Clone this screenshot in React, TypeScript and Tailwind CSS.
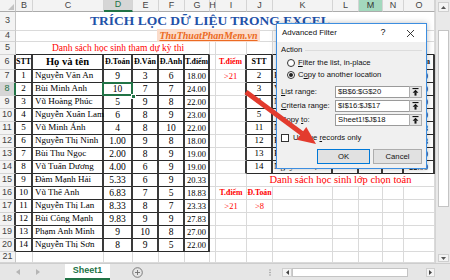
import React from 'react';

type Item = { c: number; w?: number; span?: string; t?: React.ReactNode; k?: string; sel?: boolean };

const LETTERS = ['B', 'C', 'D', 'E', 'F', 'G', 'H', 'I', 'J', 'K', 'L', 'M', 'N', 'O'];

const PEOPLE: string[][] = [
  ['1', 'Nguyễn Văn An', '9', '3', '6', '18.00'],
  ['2', 'Bùi Minh Anh', '10', '7', '7', '24.00'],
  ['3', 'Vũ Hoàng Phúc', '5', '9', '8', '22.00'],
  ['4', 'Nguyễn Xuân Lam', '6', '8', '9', '23.00'],
  ['5', 'Vũ Minh Ánh', '4', '8', '10', '22.00'],
  ['6', 'Nguyễn Thị Ninh', '1.00', '9', '8', '18.00'],
  ['7', 'Bùi Thu Ngọc', '2.00', '8', '9', '19.00'],
  ['8', 'Vũ Tuấn Dương', '4.00', '6', '9', '19.00'],
  ['9', 'Đàm Mạnh Hải', '5.33', '6', '9', '20.33'],
  ['10', 'Vũ Thế Anh', '6.83', '7', '5', '18.83'],
  ['11', 'Nguyễn Thị Lan', '8.33', '8', '7', '23.33'],
  ['12', 'Bùi Công Mạnh', '9.83', '9', '9', '27.83'],
  ['13', 'Phạm Anh Minh', '9', '10', '8', '27.00'],
  ['14', 'Nguyễn Thị Sơn', '8', '9', '5', '22.00'],
];

// rows copied by the previous filter (T.điểm > 21); only J, K and O peek out from under the dialog
const PICKED = [2, 3, 4, 5, 11, 12, 13, 14];
const PEEK = [0, 1, 5];

const HEADS = ['STT', 'Họ và tên', 'Đ.Toán', 'Đ.Văn', 'Đ.Anh', 'T.điểm'];
const HEAD_K = [
  'justify-center font-bold text-[8px]',
  'justify-center font-bold text-[10.5px]',
  'justify-center font-bold text-[8px]',
  'justify-center font-bold text-[8px]',
  'justify-center font-bold text-[8px]',
  'justify-center font-bold text-[7.8px]',
];
const BODY_K = [
  'justify-center text-[9px]',
  'pl-[2px] text-[9px]',
  'justify-center text-[9.5px]',
  'justify-center text-[9.5px]',
  'justify-center text-[9.5px]',
  'justify-center text-[8.5px]',
];
const RED = 'text-[#ff0000]';

const inLeft = (r: number, c: number) => r >= 6 && r <= 20 && c >= 0 && c <= 5;
const inRight = (r: number, c: number) => r >= 6 && r <= 14 && c >= 8 && c <= 13;
const inTable = (r: number, c: number) => inLeft(r, c) || inRight(r, c);

function rowItems(r: number): Item[] {
  const items: Item[] = [];
  if (r === 3) {
    return [{ c: 0, w: 14, span: 'col-span-14', t: 'TRÍCH LỌC DỮ LIỆU TRONG EXCEL', k: 'pl-[74px] font-bold text-[13.5px] text-[#1f52a8]' }];
  }
  if (r === 4) items.push({ c: 0, w: 7, span: 'col-span-7' });
  if (r === 5) {
    items.push({ c: 0, w: 6, span: 'col-span-6', t: 'Danh sách học sinh tham dự kỳ thi', k: `justify-center pl-[11px] text-[9.5px] ${RED}` });
  }
  if (r >= 6 && r <= 20) {
    const data = r === 6 ? HEADS : PEOPLE[r - 7];
    data.forEach((t, i) => items.push({ c: i, t, k: r === 6 ? HEAD_K[i] : BODY_K[i], sel: r === 8 && i === 2 }));
  }
  if (r >= 6 && r <= 14) {
    const data = r === 6 ? HEADS : PEOPLE[PICKED[r - 7] - 1];
    PEEK.forEach((i) => {
      if (r === 6 && i === 1) return;
      items.push({ c: 8 + i, t: data[i], k: r === 6 ? HEAD_K[i] : i === 1 ? 'pl-[1px] text-[9px] overflow-hidden' : BODY_K[i] });
    });
  }
  if (r === 6) items.push({ c: 7, t: 'T.điểm', k: `justify-center font-bold text-[7.8px] ${RED}` });
  if (r === 7) items.push({ c: 7, t: '>21', k: `justify-center text-[8.5px] ${RED}` });
  if (r === 15) {
    items.push({ c: 8, w: 6, span: 'col-span-6', t: 'Danh sách học sinh lớp chọn toán', k: `justify-center text-[10.5px] ${RED}` });
  }
  if (r === 16) {
    items.push({ c: 7, t: 'T.điểm', k: `justify-center font-bold text-[7.8px] ${RED}` });
    items.push({ c: 8, t: 'Đ.Toán', k: `justify-center font-bold text-[7.8px] ${RED}` });
  }
  if (r === 17) {
    items.push({ c: 7, t: '>21', k: `justify-center text-[8.5px] ${RED}` });
    items.push({ c: 8, t: '>8', k: `justify-center text-[8.5px] ${RED}` });
  }
  return items;
}

function RowHead({ r }: { r: number }) {
  const sel = r === 8;
  const side = sel ? 'border-r-2 border-r-[#217346]' : inTable(r, 0) ? 'border-r-2 border-r-[#3a3a3a]' : 'border-r border-r-[#c6c6c6]';
  return (
    <div
      className={`flex items-center justify-center border-b border-b-[#d4d4d4] font-['Liberation_Sans',Arial,sans-serif] text-[9px] ${side} ${
        sel ? 'bg-[#d6d6d6] text-[#217346]' : 'bg-[#f3f3f3] text-[#444]'
      }`}
    >
      {r}
    </div>
  );
}

function SheetRow({ r }: { r: number }) {
  const items = rowItems(r);
  const cells: React.ReactNode[] = [];
  let c = 0;
  while (c < 14) {
    const it: Item = items.find((x) => x.c === c) ?? { c };
    const w = it.w ?? 1;
    const cols = Array.from({ length: w }, (_, i) => c + i);
    const right = inTable(r, c + w - 1) || inTable(r, c + w);
    const bottom = cols.some((x) => inTable(r, x) || inTable(r + 1, x));
    cells.push(
      <div
        key={c}
        className={`flex items-center whitespace-nowrap border-b ${right ? 'border-r-2 border-r-[#3a3a3a]' : 'border-r border-r-[#dadada]'} ${
          bottom ? 'border-b-[#2b2b2b]' : 'border-b-[#dadada]'
        } ${it.sel ? 'relative' : ''} ${it.span ?? ''} ${it.k ?? ''}`}
      >
        {it.t}
        {it.sel && (
          <>
            <div className="absolute -left-[2px] -top-[1px] -right-[2px] -bottom-[1px] z-10 border-2 border-[#217346]" />
            <div className="absolute -right-[5px] -bottom-[4px] z-10 w-[5px] h-[5px] bg-[#217346] border border-white" />
          </>
        )}
      </div>
    );
    c += w;
  }
  return (
    <>
      <RowHead r={r} />
      {cells}
    </>
  );
}

function ColumnHeads() {
  return (
    <>
      <div className="relative bg-[#f3f3f3] border-r border-b border-r-[#c6c6c6] border-b-[#ababab]">
        <svg className="absolute right-[1px] bottom-[1px]" width="6" height="6" viewBox="0 0 6 6">
          <polygon points="6,0 6,6 0,6" fill="#c2c2c2" />
        </svg>
      </div>
      {LETTERS.map((L) => (
        <div
          key={L}
          className={`flex items-center justify-center border-r border-r-[#d4d4d4] font-['Liberation_Sans',Arial,sans-serif] text-[9px] ${
            L === 'D'
              ? 'bg-[#d6d6d6] text-[#217346] border-b-2 border-b-[#217346]'
              : L === 'M'
              ? 'bg-[#a3d8bd] text-[#333] border-b border-b-[#ababab]'
              : 'bg-[#f3f3f3] text-[#444] border-b border-b-[#ababab]'
          }`}
        >
          {L}
        </div>
      ))}
    </>
  );
}

function VScroll() {
  return (
    <div className="w-[15px] h-[263px] flex flex-col items-center bg-[#e9e9e9] border-l border-[#d4d4d4]">
      <div className="mt-[2px] w-[11px] h-[10px] flex items-center justify-center bg-[#f4f4f4] border border-[#cfcfcf]">
        <svg width="5" height="3" viewBox="0 0 5 3">
          <polygon points="2.5,0 5,3 0,3" fill="#555" />
        </svg>
      </div>
      <div className="mt-[18px] w-[11px] h-[177px] bg-white border border-[#c4c4c4]" />
      <div className="flex-1" />
      <div className="mb-[1px] w-[11px] h-[8px] flex items-center justify-center bg-[#f4f4f4] border border-[#cfcfcf]">
        <svg width="5" height="3" viewBox="0 0 5 3">
          <polygon points="0,0 5,0 2.5,3" fill="#555" />
        </svg>
      </div>
    </div>
  );
}

function TabBar() {
  return (
    <div className="h-[17px] flex items-stretch bg-[#e6e6e6] border-t border-[#cdcdcd] font-['Liberation_Sans',Arial,sans-serif]">
      <div className="w-[65px] flex items-center">
        <svg className="ml-[16px]" width="4" height="6" viewBox="0 0 4 6">
          <polygon points="4,0 4,6 0,3" fill="#b5b5b5" />
        </svg>
        <svg className="ml-[16px]" width="4" height="6" viewBox="0 0 4 6">
          <polygon points="0,0 4,3 0,6" fill="#b5b5b5" />
        </svg>
      </div>
      <div className="w-[45px] flex items-center justify-center bg-white border-b-2 border-[#217346] text-[9px] font-bold text-[#217346]">
        Sheet1
      </div>
      <div className="w-[22px]" />
      <div className="w-[11px] flex items-center">
        <svg width="11" height="11" viewBox="0 0 11 11">
          <circle cx="5.5" cy="5.5" r="4.8" fill="none" stroke="#6f6f6f" strokeWidth="0.9" />
          <path d="M5.5 3v5M3 5.5h5" stroke="#6f6f6f" strokeWidth="0.9" />
        </svg>
      </div>
      <div className="w-[124px]" />
      <div className="w-[6px] flex items-center justify-center">
        <svg width="2" height="7" viewBox="0 0 2 7">
          <circle cx="1" cy="1" r="0.7" fill="#8a8a8a" />
          <circle cx="1" cy="3.5" r="0.7" fill="#8a8a8a" />
          <circle cx="1" cy="6" r="0.7" fill="#8a8a8a" />
        </svg>
      </div>
      <div className="w-[9px]" />
      <div className="w-[10px] flex items-center">
        <div className="w-[10px] h-[9px] flex items-center justify-center bg-[#f4f4f4] border border-[#cfcfcf]">
          <svg width="3" height="5" viewBox="0 0 3 5">
            <polygon points="3,0 3,5 0,2.5" fill="#444" />
          </svg>
        </div>
      </div>
      <div className="w-[116px] flex items-center">
        <div className="w-full h-[9px] bg-white border border-[#c4c4c4]" />
      </div>
      <div className="w-[18px]" />
      <div className="w-[9px] flex items-center">
        <div className="w-[9px] h-[9px] flex items-center justify-center bg-[#f4f4f4] border border-[#cfcfcf]">
          <svg width="3" height="5" viewBox="0 0 3 5">
            <polygon points="0,0 3,2.5 0,5" fill="#444" />
          </svg>
        </div>
      </div>
      <div className="w-[15px]" />
    </div>
  );
}

function PickIcon() {
  return (
    <svg width="7" height="8" viewBox="0 0 7 8">
      <rect x="0.5" y="0" width="6" height="1.1" fill="#111" />
      <polygon points="3.5,1.8 0.6,4.8 6.4,4.8" fill="#111" />
      <rect x="2.5" y="4.6" width="2" height="3" fill="#111" />
    </svg>
  );
}

function RangeRow({ label, value }: { label: React.ReactNode; value: string }) {
  return (
    <div className="mt-[2px] h-[12px] flex items-stretch">
      <div className="w-[54px] flex items-center">{label}</div>
      <div className="flex-1 flex items-center pl-[2px] bg-white border border-[#9a9a9a]">{value}</div>
      <div className="w-[13px] -ml-px flex items-center justify-center bg-[#e5e5e5] border border-[#adadad]">
        <PickIcon />
      </div>
    </div>
  );
}

function Radio({ on, children }: { on?: boolean; children: React.ReactNode }) {
  return (
    <div className="h-[12px] flex items-center pl-[6px] gap-[3px]">
      <div className="w-[8px] h-[8px] rounded-full bg-white border border-[#333] flex items-center justify-center">
        {on && <div className="w-[4px] h-[4px] rounded-full bg-[#222]" />}
      </div>
      <span>{children}</span>
    </div>
  );
}

function Dialog() {
  return (
    <div className="absolute left-[276px] top-[23px] w-[151px] h-[146px] flex flex-col bg-[#f0f0f0] border border-[#3d8ee0] shadow-[0_0_6px_rgba(0,0,0,0.25)] font-['Liberation_Sans',Arial,sans-serif] text-[7.7px] text-[#111]">
      <div className="h-[18px] flex items-center pl-[5px] bg-white">
        <span className="flex-1 text-[7.9px]">Advanced Filter</span>
        <span className="w-[10px] mr-[19px] text-center text-[9px]">?</span>
        <svg className="mr-[12px]" width="7" height="7" viewBox="0 0 7 7">
          <path d="M0 0L7 7M7 0L0 7" stroke="#222" strokeWidth="0.9" />
        </svg>
      </div>
      <div className="flex-1 flex flex-col pl-[4px] pr-[4px]">
        <div className="mt-[3px] h-[10px] flex items-center gap-[3px]">
          <span>Action</span>
          <div className="flex-1 h-px bg-[#dcdcdc]" />
        </div>
        <div className="mt-[2px]">
          <Radio>
            <u className="underline-offset-1">F</u>ilter the list, in-place
          </Radio>
          <Radio on>
            C<u className="underline-offset-1">o</u>py to another location
          </Radio>
        </div>
        <div className="mt-[3px]">
          <RangeRow
            label={
              <span>
                <u className="underline-offset-1">L</u>ist range:
              </span>
            }
            value="$B$6:$G$20"
          />
          <RangeRow
            label={
              <span>
                <u className="underline-offset-1">C</u>riteria range:
              </span>
            }
            value="$I$16:$J$17"
          />
          <RangeRow
            label={
              <span>
                Copy <u className="underline-offset-1">t</u>o:
              </span>
            }
            value="Sheet1!$J$18"
          />
        </div>
        <div className="mt-[7px] h-[9px] flex items-center gap-[4px]">
          <div className="w-[8px] h-[8px] bg-white border border-[#333]" />
          <span>
            Unique <u className="underline-offset-1">r</u>ecords only
          </span>
        </div>
        <div className="mt-[7px] h-[15px] flex gap-[3px] pl-[36px]">
          <div className="w-[53px] flex items-center justify-center bg-[#e1e1e1] border border-[#0078d7]">OK</div>
          <div className="w-[49px] flex items-center justify-center bg-[#e1e1e1] border border-[#adadad]">Cancel</div>
        </div>
      </div>
    </div>
  );
}

function Arrow() {
  return (
    <svg className="absolute left-0 top-0 pointer-events-none" width="450" height="280" viewBox="0 0 450 280">
      <line x1="246" y1="92" x2="302" y2="133.5" stroke="#e33b2e" strokeWidth="5" />
      <polygon points="316,144 306.3,126.9 296.7,139.7" fill="#e33b2e" />
    </svg>
  );
}

export default function App() {
  const rows = Array.from({ length: 19 }, (_, i) => i + 3);
  return (
    <div className="relative w-[450px] h-[280px] overflow-hidden bg-white text-black font-['Liberation_Serif',serif]">
      <div className="flex h-[263px]">
        <div className="w-[435px] h-[263px] grid grid-cols-[16px_17px_71px_29px_26px_26px_25px_6px_31px_26px_60px_26px_24px_21px_31px] grid-rows-[12px_19px_11px_13px_15px_repeat(14,13px)_11px]">
          <ColumnHeads />
          {rows.map((r) => (
            <SheetRow key={r} r={r} />
          ))}
        </div>
        <VScroll />
      </div>
      <TabBar />

      {/* pasted watermark picture */}
      <div className="absolute left-[157px] top-[29px] w-[103px] h-[13px] flex items-center justify-center bg-[#fbdccb]">
        <span className="italic font-bold text-[10px] text-[#ec6a22] underline underline-offset-1">ThuThuatPhanMem.vn</span>
      </div>

      <Dialog />
      <Arrow />
    </div>
  );
}
